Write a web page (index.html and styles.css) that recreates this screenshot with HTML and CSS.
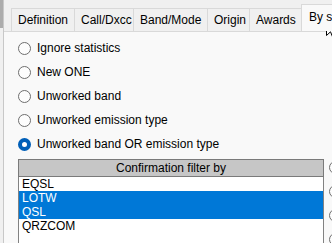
FILE: index.html
```html
<!DOCTYPE html>
<html lang="en">
<head>
    <meta charset="UTF-8">
    <title>Statistics filter</title>
    <link rel="stylesheet" href="styles.css">
</head>
<body>
    <div class="window">
        <div class="edge"></div>
        <div class="tabctl">
            <div class="tabs">
                <div class="tab t-def">Definition</div>
                <div class="tab t-call">Call/Dxcc</div>
                <div class="tab t-band">Band/Mode</div>
                <div class="tab t-orig">Origin</div>
                <div class="tab t-award">Awards</div>
                <div class="tab active">By status</div>
            </div>
            <div class="panel">
                <div class="options">
                    <label class="opt"><span class="radio"></span>Ignore statistics</label>
                    <label class="opt"><span class="radio"></span>New ONE</label>
                    <label class="opt"><span class="radio"></span>Unworked band</label>
                    <label class="opt"><span class="radio"></span>Unworked emission type</label>
                    <label class="opt"><span class="radio on"></span>Unworked band OR emission type</label>
                </div>
                <div class="listrow">
                    <div class="listbox">
                        <div class="list-head">Confirmation filter by</div>
                        <div class="item">EQSL</div>
                        <div class="item sel">LOTW</div>
                        <div class="item sel">QSL</div>
                        <div class="item">QRZCOM</div>
                    </div>
                    <div class="side">
                        <span class="radio"></span>
                        <span class="radio"></span>
                        <span class="radio"></span>
                        <span class="radio"></span>
                    </div>
                </div>
            </div>
        </div>
    </div>
    <svg class="cursor" width="13" height="21" viewBox="0 0 13 21">
        <path d="M0.5 0.5 L0.5 16.5 L4.5 12.8 L7.2 19.5 L9.6 18.5 L6.9 11.9 L12 11.9 Z" fill="#fff" stroke="#000" stroke-width="1"/>
    </svg>
</body>
</html>
```

FILE: styles.css
```css
* {
    box-sizing: border-box;
}
body {
    margin: 0;
    width: 332px;
    height: 243px;
    overflow: hidden;
    position: relative;
    background: #f0f0f0;
    font-family: "Liberation Sans", Arial, sans-serif;
    font-size: 12px;
    color: #000;
}
.window {
    display: flex;
    height: 100%;
}
.edge {
    width: 4px;
    flex: none;
    background: linear-gradient(#acacac 0 28px, #f0f0f0 28px);
    border-right: 1px solid #c8c8c8;
}
.tabctl {
    flex: 1;
    min-width: 0;
    display: flex;
    flex-direction: column;
}
.tabs {
    display: flex;
    align-items: flex-end;
    height: 31px;
    padding-left: 7px;
    overflow: hidden;
}
.tab {
    flex: none;
    height: 23px;
    padding: 0 6px;
    line-height: 22px;
    text-align: center;
    white-space: nowrap;
    background: #f0f0f0;
    border: 1px solid #d9d9d9;
    border-bottom: none;
    margin-right: -1px;
}
.t-def { width: 64px; }
.t-call { width: 60px; }
.t-band { width: 75px; }
.t-orig { width: 43px; }
.t-award { width: 53px; }
.tab.active {
    height: 28px;
    margin-bottom: -1px;
    padding: 0 0 4px 7px;
    line-height: 24px;
    text-align: left;
    background: #f9f9f9;
    position: relative;
    z-index: 1;
}
.panel {
    flex: 1;
    background: #f9f9f9;
    border-top: 1px solid #d9d9d9;
    padding: 4px 0 0 14px;
    overflow: hidden;
}
.opt {
    display: flex;
    align-items: center;
    gap: 6px;
    height: 24px;
    white-space: nowrap;
}
.radio {
    flex: none;
    width: 13px;
    height: 13px;
    border: 1px solid #6e6e6e;
    border-radius: 50%;
    background: #fdfdfd;
}
.radio.on {
    border: 4px solid #005fb8;
    background: #fff;
}
.listrow {
    display: flex;
    margin-top: 3px;
}
.listbox {
    flex: none;
    width: 306px;
    height: 100px;
    background: #fff;
    border: 1px solid #828282;
    border-top: none;
}
.list-head {
    height: 18px;
    margin: 0 -1px;
    line-height: 16px;
    text-align: center;
    background: #c6c6c6;
    border: 1px solid #7a7a7a;
}
.item {
    height: 14px;
    line-height: 14px;
    padding-left: 3px;
}
.item.sel {
    background: #0078d7;
    color: #fff;
}
.side {
    display: flex;
    flex-direction: column;
    gap: 11px;
    margin: 2px 0 0 5px;
}
.cursor {
    position: absolute;
    left: 326px;
    top: 19px;
}
```
